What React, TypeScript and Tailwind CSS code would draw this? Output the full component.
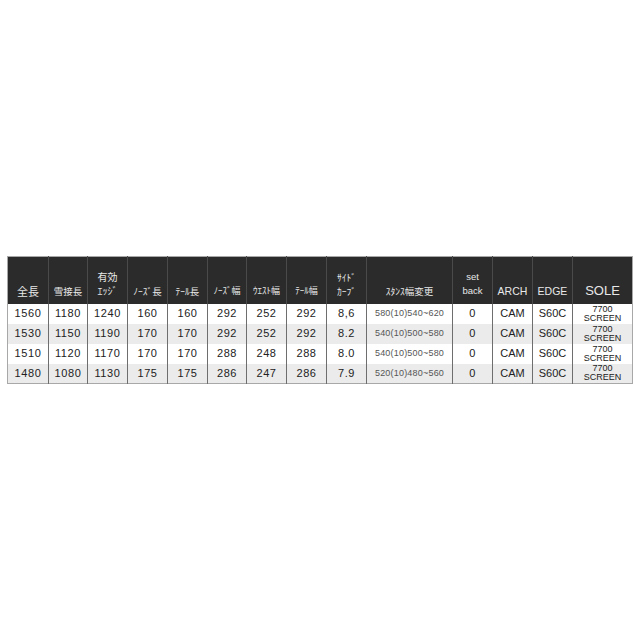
const font = '"Liberation Sans", "Noto Sans CJK JP", sans-serif';
const jp = '"Noto Sans CJK JP", "Liberation Sans", sans-serif';

const widths = [41, 39, 40, 40, 40, 39, 40, 40, 40, 86, 40, 40, 40, 60];

type Head = { lines: string[]; size: string };

const heads: Head[] = [
  { lines: ['全長'], size: 'text-[11px]' },
  { lines: ['雪接長'], size: 'text-[9.5px]' },
  { lines: ['有効', 'ｴｯｼﾞ'], size: 'text-[10px]' },
  { lines: ['ﾉｰｽﾞ長'], size: 'text-[9.5px]' },
  { lines: ['ﾃｰﾙ長'], size: 'text-[9.5px]' },
  { lines: ['ﾉｰｽﾞ幅'], size: 'text-[9px]' },
  { lines: ['ｳｴｽﾄ幅'], size: 'text-[9px]' },
  { lines: ['ﾃｰﾙ幅'], size: 'text-[9px]' },
  { lines: ['ｻｲﾄﾞ', 'ｶｰﾌﾞ'], size: 'text-[9.5px]' },
  { lines: ['ｽﾀﾝｽ幅変更'], size: 'text-[9.5px]' },
  { lines: ['set', 'back'], size: 'text-[9.5px]' },
  { lines: ['ARCH'], size: 'text-[10.5px]' },
  { lines: ['EDGE'], size: 'text-[10.5px]' },
  { lines: ['SOLE'], size: 'text-[13px]' },
];

const rows = [
  ['1560', '1180', '1240', '160', '160', '292', '252', '292', '8,6', '580(10)540~620', '0', 'CAM', 'S60C'],
  ['1530', '1150', '1190', '170', '170', '292', '252', '292', '8.2', '540(10)500~580', '0', 'CAM', 'S60C'],
  ['1510', '1120', '1170', '170', '170', '288', '248', '288', '8.0', '540(10)500~580', '0', 'CAM', 'S60C'],
  ['1480', '1080', '1130', '175', '175', '286', '247', '286', '7.9', '520(10)480~560', '0', 'CAM', 'S60C'],
];

export default function App() {
  return (
    <div className="flex h-screen w-full items-center justify-center bg-white">
      <table
        className="table-fixed border-collapse border border-[#a8a8a8]"
        style={{ fontFamily: font, width: 625 }}
      >
        <colgroup>
          {widths.map((w, i) => (
            <col key={i} style={{ width: w }} />
          ))}
        </colgroup>
        <thead>
          <tr className="h-[47px] bg-[#2b2b2b]">
            {heads.map((h, i) => (
              <th
                key={i}
                className={`border-l border-[#4a4a4a] px-0 pb-[6px] text-center align-bottom font-normal leading-[14px] text-[#e8e8e8] first:border-l-0 ${h.size}`}
                style={{ fontFamily: i >= 10 ? font : jp }}
              >
                {h.lines.map((l) => (
                  <div key={l}>{l}</div>
                ))}
              </th>
            ))}
          </tr>
        </thead>
        <tbody>
          {rows.map((r, ri) => (
            <tr key={ri} className={`h-[20px] ${ri % 2 === 1 ? 'bg-[#ebebeb]' : 'bg-white'}`}>
              {r.map((c, ci) => (
                <td
                  key={ci}
                  className={`border-l border-[#6e6e6e] p-0 text-center first:border-l-0 ${
                    ci === 9
                      ? 'text-[9px] tracking-[0.2px] text-[#555]'
                      : ci >= 11
                        ? 'text-[11px] text-[#222]'
                        : 'text-[11px] tracking-[0.6px] text-[#222]'
                  }`}
                >
                  {c}
                </td>
              ))}
              <td className="border-l border-[#6e6e6e] p-0 text-center text-[9px] leading-[9px] text-[#222]">
                <div>7700</div>
                <div>SCREEN</div>
              </td>
            </tr>
          ))}
        </tbody>
      </table>
    </div>
  );
}
